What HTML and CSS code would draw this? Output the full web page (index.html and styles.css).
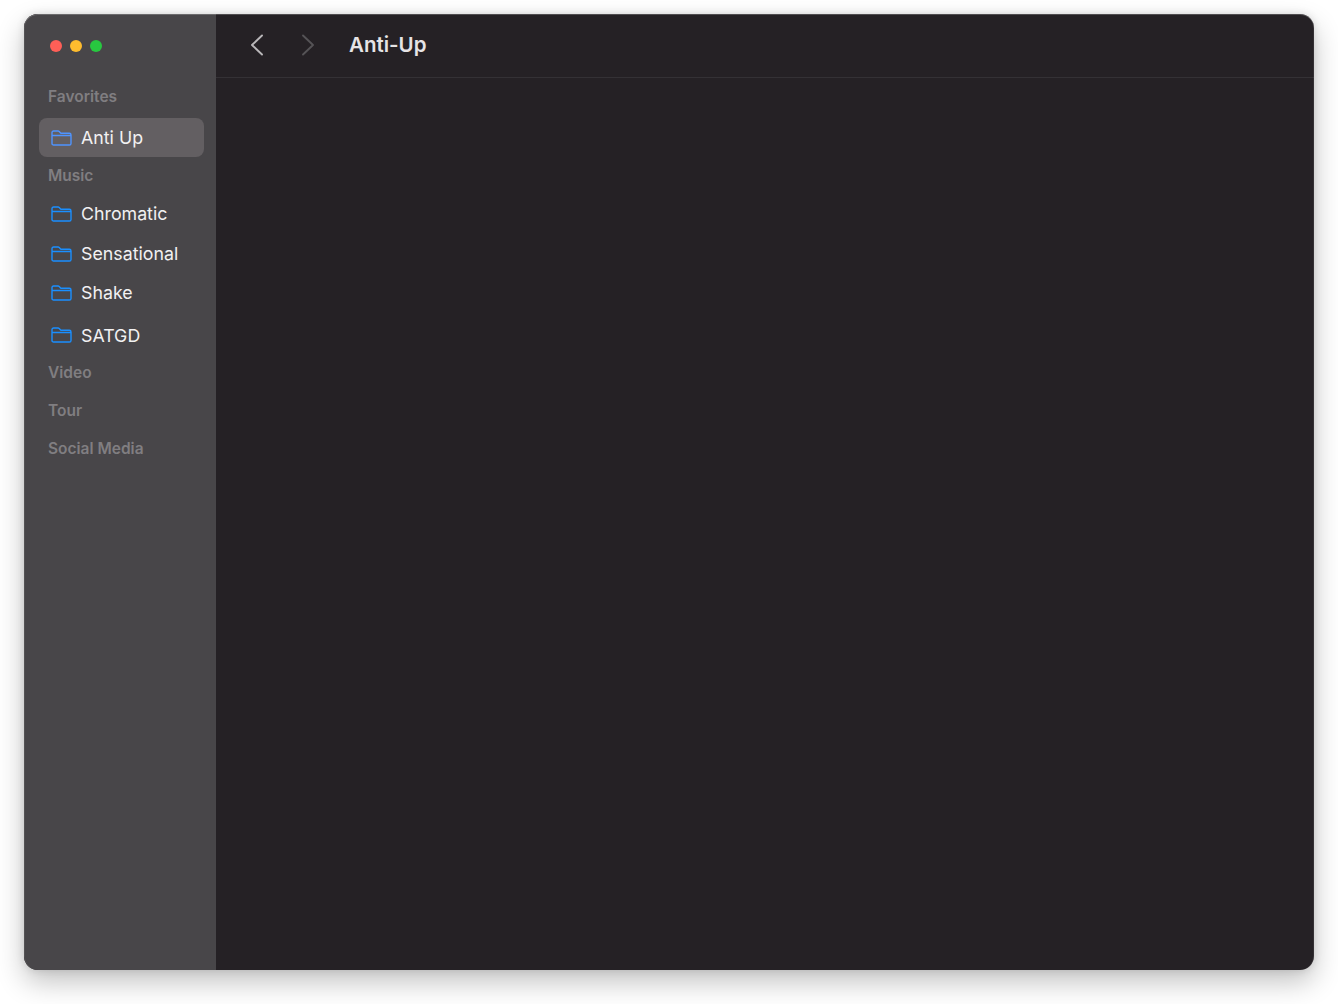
FILE: index.html
```html
<!DOCTYPE html>
<html lang="en">
<head>
<meta charset="utf-8">
<title>Anti-Up</title>
<link rel="stylesheet" href="styles.css">
</head>
<body>
<svg class="defs" width="0" height="0" aria-hidden="true">
  <symbol id="folder" viewBox="0 0 21 16">
    <path d="M1 4V2.600C1 1.700 1.700 1 2.600 1H7c.5 0 .9.2 1.200.5L9.600 3c.2.2.5.3.8.3h8c1 0 1.600.7 1.600 1.600v8.500c0 .9-.7 1.600-1.600 1.600H2.600C1.700 15 1 14.300 1 13.400V4Zm0 1.500h19" fill="none" stroke="currentColor" stroke-width="1.400" stroke-linejoin="round"/>
  </symbol>
</svg>
<div class="window">
  <aside class="sidebar">
    <div class="lights">
      <span class="light red"></span>
      <span class="light yellow"></span>
      <span class="light green"></span>
    </div>
    <div class="section first">Favorites</div>
    <a class="item active"><svg class="folder"><use href="#folder"/></svg><span>Anti Up</span></a>
    <div class="section music">Music</div>
    <a class="item"><svg class="folder"><use href="#folder"/></svg><span>Chromatic</span></a>
    <a class="item tight"><svg class="folder"><use href="#folder"/></svg><span>Sensational</span></a>
    <a class="item"><svg class="folder"><use href="#folder"/></svg><span>Shake</span></a>
    <a class="item last"><svg class="folder"><use href="#folder"/></svg><span>SATGD</span></a>
    <div class="section">Video</div>
    <div class="section">Tour</div>
    <div class="section">Social Media</div>
  </aside>
  <main class="main">
    <header class="toolbar">
      <svg class="chev back" viewBox="0 0 14 22"><path d="M12 1.500 2 11l10 9.500"/></svg>
      <svg class="chev forward" viewBox="0 0 14 22"><path d="M2 1.500 12 11 2 20.500"/></svg>
      <h1 class="title">Anti-Up</h1>
    </header>
  </main>
</div>
</body>
</html>
```
FILE: styles.css
```css
html, body {
  margin: 0;
  height: 100%;
  background: #fff;
  overflow: hidden;
}
body {
  padding: 14px 24px 34px;
  box-sizing: border-box;
  font-family: Inter, "Liberation Sans", sans-serif;
}
.defs { position: absolute; }
.window {
  position: relative;
  display: flex;
  height: 956px;
  border-radius: 14px;
  overflow: hidden;
  background: #252125;
  box-shadow: 0 12px 28px rgba(0, 0, 0, .24), 0 0 8px rgba(0, 0, 0, .12);
}
.window::after {
  content: "";
  position: absolute;
  inset: 0;
  border-radius: 14px;
  pointer-events: none;
  box-shadow: inset 0 1px 0 rgba(255, 255, 255, .2), inset 1px 0 0 rgba(255, 255, 255, .07), inset -1px 0 0 rgba(255, 255, 255, .07);
}
.sidebar {
  width: 192px;
  box-sizing: border-box;
  padding: 26px 12px 0 15px;
  background: #484649;
  flex: none;
}
.lights {
  display: flex;
  gap: 8px;
  padding-left: 11px;
  height: 12px;
}
.light {
  width: 12px;
  height: 12px;
  border-radius: 50%;
}
.red { background: #ff5f57; }
.yellow { background: #febc2e; }
.green { background: #28c840; }
.section {
  height: 38px;
  line-height: 38px;
  padding-left: 9px;
  font-size: 15.500px;
  font-weight: 600;
  color: #807e81;
}
.section.first { margin-top: 26px; margin-bottom: 2px; }
.section.music { margin-bottom: -1px; }
.item {
  display: flex;
  align-items: center;
  gap: 9px;
  height: 39px;
  padding-left: 12px;
  border-radius: 8px;
  margin-bottom: 1px;
  font-size: 17.800px;
  color: #f2f1f2;
}
.item.tight { margin-bottom: 0; }
.item.last {
  height: 38px;
  margin-top: 4px;
  margin-bottom: 0;
}
.item.active {
  background: #635f62;
  margin-bottom: 0;
}
.folder {
  width: 21px;
  height: 16px;
  flex: none;
  color: #1a8fff;
}
.active .folder { color: #4f94ff; }
.main {
  flex: 1;
  min-width: 0;
}
.toolbar {
  display: flex;
  align-items: center;
  height: 63px;
  padding-left: 34px;
  border-bottom: 1px solid #343135;
}
.chev {
  width: 14px;
  height: 22px;
  flex: none;
  margin-bottom: 1px;
  fill: none;
  stroke-width: 1.900;
  stroke-linecap: round;
  stroke-linejoin: round;
}
.back { stroke: #b9b7b9; margin-right: 37px; }
.forward { stroke: #555356; margin-right: 34px; }
.title {
  margin: 0 0 3px;
  font-size: 20.500px;
  font-weight: 600;
  color: #e6e4e6;
}
```
